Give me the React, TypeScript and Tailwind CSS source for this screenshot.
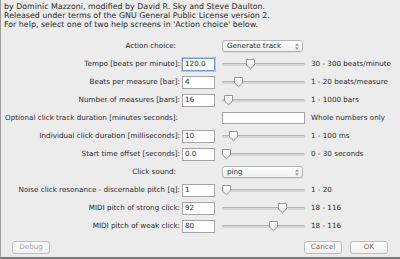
const font = { fontFamily: '"DejaVu Sans", Verdana, sans-serif' };

const Thumb = ({ x }: { x: number }) => (
  <svg
    width="11"
    height="12"
    viewBox="0 0 11 12"
    className="absolute top-[-6px]"
    style={{ left: x - 5.5 }}
  >
    <defs>
      <linearGradient id="tg" x1="0" y1="0" x2="0" y2="1">
        <stop offset="0" stopColor="#ffffff" />
        <stop offset="1" stopColor="#e4e4e4" />
      </linearGradient>
    </defs>
    <path d="M1.5 1.5 H9.5 V7 L5.5 10.8 L1.5 7 Z" fill="url(#tg)" stroke="#8c8c8c" strokeWidth="0.9" />
  </svg>
);

const Slider = ({ pos }: { pos: number }) => (
  <div className="relative ml-[7px] h-[3px] w-[83px] rounded-full border-t border-[#b3b3b3] bg-[#d6d6d6]">
    <Thumb x={pos} />
  </div>
);

const Field = ({ value, focus }: { value: string; focus?: boolean }) => (
  <div
    className={
      focus
        ? "ml-[1px] flex h-[13px] w-[33px] items-center border border-[#6a9fd8] bg-white pl-[2px] shadow-[0_0_0_1px_#a9c8ee]"
        : "ml-[1px] flex h-[13px] w-[33px] items-center border border-[#a5a5a5] bg-white pl-[2px]"
    }
  >
    {value}
  </div>
);

const Row = ({
  label,
  value,
  pos,
  hint,
  focus,
}: {
  label: string;
  value: string;
  pos: number;
  hint: string;
  focus?: boolean;
}) => (
  <div className="flex h-[18px] items-center">
    <div className="w-[180px] whitespace-nowrap pr-[1px] text-right">{label}</div>
    <Field value={value} focus={focus} />
    <Slider pos={pos} />
    <div className="ml-[6px] whitespace-nowrap">{hint}</div>
  </div>
);

const Select = ({ value }: { value: string }) => (
  <div className="ml-[41px] flex h-[12px] w-[81px] items-center justify-between rounded-[3px] border border-[#b5b5b5] bg-gradient-to-b from-white to-[#efefef] pl-[4px] pr-[3px] shadow-[0_1px_0_#dcdcdc]">
    <span>{value}</span>
    <svg width="4" height="7" viewBox="0 0 4 7">
      <path d="M0 2.6 L2 0.4 L4 2.6 Z M0 4.4 L2 6.6 L4 4.4 Z" fill="#8a8a8a" />
    </svg>
  </div>
);

const Button = ({ label, dim }: { label: string; dim?: boolean }) => (
  <div
    className={
      "flex h-[13px] w-[38px] items-center justify-center rounded-[3px] border border-[#bdbdbd] bg-gradient-to-b from-white to-[#f0f0f0] " +
      (dim ? "text-[#a8a8a8]" : "text-[#6e6e6e]")
    }
  >
    {label}
  </div>
);

export default function App() {
  return (
    <div
      className="h-[259px] w-[400px] overflow-hidden border-b-2 border-l border-b-[#7a7a7a] border-l-[#9c9c9c] bg-[#ececec] text-[7.2px] text-[#2a2a2a]"
      style={font}
    >
      <div className="whitespace-nowrap pl-[3px] pt-[2px] text-[7.9px] leading-[9px]">
        <div>by Dominic Mazzoni, modified by David R. Sky and Steve Daulton.</div>
        <div>Released under terms of the GNU General Public License version 2.</div>
        <div>For help, select one of two help screens in 'Action choice' below.</div>
      </div>

      <div className="mt-[8px]">
        <div className="flex h-[18px] items-center">
          <div className="w-[180px] pr-[5px] text-right">Action choice:</div>
          <Select value="Generate track" />
        </div>
        <Row label="Tempo [beats per minute]:" value="120.0" pos={28} hint="30 - 300 beats/minute" focus />
        <Row label="Beats per measure [bar]:" value="4" pos={16} hint="1 - 20 beats/measure" />
        <Row label="Number of measures [bars]:" value="16" pos={6} hint="1 - 1000 bars" />
        <div className="flex h-[18px] items-center">
          <div className="w-[180px] whitespace-nowrap pr-[3px] text-right">Optional click track duration [minutes seconds]:</div>
          <div className="ml-[41px] h-[12px] w-[83px] border border-[#a5a5a5] bg-white" />
          <div className="ml-[6px] whitespace-nowrap">Whole numbers only</div>
        </div>
        <Row label="Individual click duration [milliseconds]:" value="10" pos={11} hint="1 - 100 ms" />
        <Row label="Start time offset [seconds]:" value="0.0" pos={4} hint="0 - 30 seconds" />
        <div className="flex h-[18px] items-center">
          <div className="w-[180px] pr-[5px] text-right">Click sound:</div>
          <Select value="ping" />
        </div>
        <Row label="Noise click resonance - discernable pitch [q]:" value="1" pos={4} hint="1 - 20" />
        <Row label="MIDI pitch of strong click:" value="92" pos={60} hint="18 - 116" />
        <Row label="MIDI pitch of weak click:" value="80" pos={51} hint="18 - 116" />
      </div>

      <div className="mt-[6px] flex items-center pl-[11px] pr-[12px]">
        <Button label="Debug" dim />
        <div className="flex-1" />
        <Button label="Cancel" />
        <div className="ml-[8px]">
          <Button label="OK" />
        </div>
      </div>
    </div>
  );
}
